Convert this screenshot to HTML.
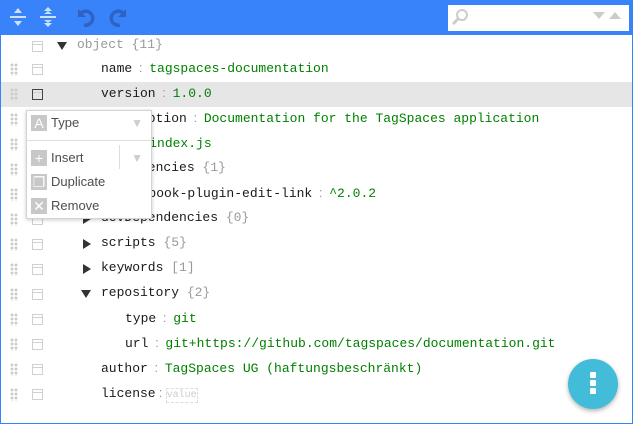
<!DOCTYPE html>
<html><head><style>
body{margin:0;width:633px;height:424px;overflow:hidden;background:#fff;font-family:"Liberation Mono",monospace;}
.wrap{position:absolute;left:0;top:0;width:631px;height:422px;border:1px solid #3883fa;}
.tb{position:absolute;left:0;top:0;width:631px;height:34px;background:#3883fa;}
.row{position:absolute;left:0;width:631px;height:25px;font-size:13px;line-height:25px;color:#1a1a1a;}
.drag{position:absolute;left:9px;top:6px;width:8px;height:13px;background:radial-gradient(circle,#ccc 1.3px,transparent 1.6px) 0 0/4px 4px;}
.box{position:absolute;left:31px;top:7px;width:9px;height:9px;border:1.5px solid #d0d0d0;}
.box:after{content:"";position:absolute;left:0;right:0;top:2px;border-top:1.5px solid #d0d0d0;}
.t{position:absolute;white-space:pre;top:-2px;}
.g{color:#008000}.gr{color:#999}
.sep{display:inline-block;width:17px;text-align:center;color:#999;font-family:"Liberation Sans",sans-serif;}
.tri{position:absolute;width:0;height:0;}
.right{border-left:8px solid #333;border-top:5px solid transparent;border-bottom:5px solid transparent;top:7px;}
.down{border-top:8px solid #333;border-left:5px solid transparent;border-right:5px solid transparent;top:8px;}
.menu{position:absolute;left:25px;top:109px;width:124px;height:107px;background:#fff;border:1px solid #d3d3d3;box-shadow:0 1px 4px rgba(0,0,0,.2);font-family:"Liberation Sans",sans-serif;font-size:13px;color:#4d4d4d;}
.mi{position:absolute;left:4px;height:18px;line-height:18px;}
.ic{position:absolute;left:0;top:1px;width:16px;height:16px;background:#c8c8c8;color:#fff;font-size:14px;text-align:center;line-height:16px;}
.lab{position:absolute;left:20px;top:0;}
</style></head><body>
<div class="wrap">
<div class="tb">
<svg width="140" height="34" style="position:absolute;left:0;top:0">
<g fill="#fff" opacity=".75"><rect x="9" y="15" width="16" height="2"/><rect x="39" y="15" width="16" height="2"/>
<path d="M13 12h8l-4-5z M13 20h8l-4 5z"/><path d="M43 10h8l-4-4z M43 13h8l-4-3z M43 19h8l-4 3z M43 22h8l-4 4z"/></g>
<g fill="none" stroke="#2d64c4" stroke-width="3.5"><path d="M80 12 a7 7 0 1 1 3 12"/><path d="M122 12 a7 7 0 1 0 -3 12"/></g>
<path d="M77 8v8h8z M125 8v8h-8z" fill="#2d64c4"/>
</svg>
<div style="position:absolute;left:447px;top:4px;width:181px;height:26px;background:#fff;">
<svg width="181" height="26"><circle cx="14" cy="10" r="5" fill="none" stroke="#ccc" stroke-width="2"/><path d="M10 14l-5 5" stroke="#ccc" stroke-width="3"/><path d="M145 7h12l-6 7z" fill="#ccc"/><path d="M161 14h12l-6-7z" fill="#ccc"/></svg>
</div>
</div>

<div class="row" style="top:33px"><div class="box"></div><div class="tri down" style="left:56px"></div><span class="t gr" style="left:76px">object {11}</span></div>
<div class="row" style="top:56px"><div class="drag"></div><div class="box"></div><span class="t" style="left:100px">name<span class="sep">:</span><span class="g">tagspaces-documentation</span></span></div>
<div class="row" style="top:81px;background:#e6e6e6"><div class="drag"></div><div class="box" style="border-color:#444"></div><span class="t" style="left:100px">version<span class="sep">:</span><span class="g">1.0.0</span></span></div>
<div class="row" style="top:106px"><div class="drag"></div><div class="box"></div><span class="t" style="left:100px">description<span class="sep">:</span><span class="g">Documentation for the TagSpaces application</span></span></div>
<div class="row" style="top:131px"><div class="drag"></div><div class="box"></div><span class="t" style="left:100px">main<span class="sep">:</span><span class="g">index.js</span></span></div>
<div class="row" style="top:156px"><div class="drag"></div><div class="box"></div><div class="tri down" style="left:80px"></div><span class="t" style="left:100px">dependencies <span class="gr">{1}</span></span></div>
<div class="row" style="top:181px"><div class="drag"></div><div class="box"></div><span class="t" style="left:124px">gitbook-plugin-edit-link<span class="sep">:</span><span class="g">^2.0.2</span></span></div>
<div class="row" style="top:206px"><div class="drag"></div><div class="box"></div><div class="tri right" style="left:82px"></div><span class="t" style="left:100px">devDependencies <span class="gr">{0}</span></span></div>
<div class="row" style="top:231px"><div class="drag"></div><div class="box"></div><div class="tri right" style="left:82px"></div><span class="t" style="left:100px">scripts <span class="gr">{5}</span></span></div>
<div class="row" style="top:256px"><div class="drag"></div><div class="box"></div><div class="tri right" style="left:82px"></div><span class="t" style="left:100px">keywords <span class="gr">[1]</span></span></div>
<div class="row" style="top:281px"><div class="drag"></div><div class="box"></div><div class="tri down" style="left:80px"></div><span class="t" style="left:100px">repository <span class="gr">{2}</span></span></div>
<div class="row" style="top:306px"><div class="drag"></div><div class="box"></div><span class="t" style="left:124px">type<span class="sep">:</span><span class="g">git</span></span></div>
<div class="row" style="top:331px"><div class="drag"></div><div class="box"></div><span class="t" style="left:124px">url<span class="sep">:</span><span class="g">git+https://github.com/tagspaces/documentation.git</span></span></div>
<div class="row" style="top:356px"><div class="drag"></div><div class="box"></div><span class="t" style="left:100px">author<span class="sep">:</span><span class="g">TagSpaces UG (haftungsbeschränkt)</span></span></div>
<div class="row" style="top:381px"><div class="drag"></div><div class="box"></div><span class="t" style="left:100px">license<span class="sep" style="width:10px">:</span><span style="color:#ccc;font-size:10px;border:1px dashed #ddd;padding:1px 0">value</span></span></div>

<div class="menu">
<div class="mi" style="top:3px;width:116px"><div class="ic">A</div><span class="lab">Type</span><span style="position:absolute;right:4px;top:0;color:#ccc;font-size:12px">▼</span></div>
<div style="position:absolute;left:0;right:0;top:29px;border-top:1px solid #ddd"></div>
<div class="mi" style="top:38px;width:116px"><div class="ic">+</div><span class="lab">Insert</span><span style="position:absolute;left:88px;top:-4px;height:24px;border-left:1px solid #ddd"></span><span style="position:absolute;right:4px;top:0;color:#ccc;font-size:12px">▼</span></div>
<div class="mi" style="top:62px"><div class="ic">❐</div><span class="lab">Duplicate</span></div>
<div class="mi" style="top:86px"><div class="ic">✕</div><span class="lab">Remove</span></div>
</div>

<div style="position:absolute;left:567px;top:358px;width:50px;height:50px;border-radius:50%;background:#42bcd9;box-shadow:0 2px 5px rgba(0,0,0,.3)">
<div style="position:absolute;left:22px;top:13px;width:6px;height:6px;background:#fff;border-radius:1px"></div>
<div style="position:absolute;left:22px;top:21px;width:6px;height:6px;background:#fff;border-radius:1px"></div>
<div style="position:absolute;left:22px;top:29px;width:6px;height:6px;background:#fff;border-radius:1px"></div>
</div>
</div>
</body></html>
